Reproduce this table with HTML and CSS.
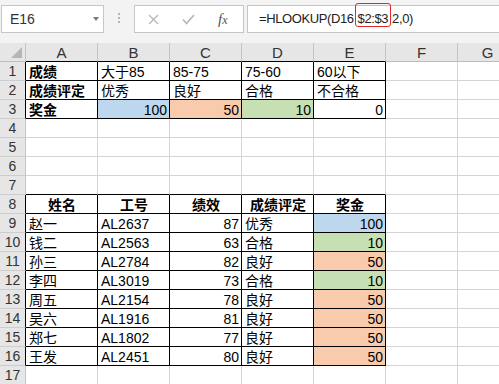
FILE: index.html
```html
<!DOCTYPE html>
<html lang="zh-CN">
<head>
    <meta charset="UTF-8">
    <meta name="viewport" content="width=device-width, initial-scale=1.0">
    <title>奖金计算</title>
    <link rel="stylesheet" href="styles.css">
</head>
<body>
    <div class="app">
        <div class="formula-bar">
            <div class="name-box">
                <span>E16</span>
                <span class="caret"></span>
            </div>
            <div class="grip"><i></i><i></i><i></i></div>
            <div class="fx-box">
                <svg width="11" height="11" viewBox="0 0 11 11">
                    <path d="M1 1 L10 10 M10 1 L1 10" stroke="#b8b8b8" stroke-width="1.4" fill="none"/>
                </svg>
                <svg width="13" height="11" viewBox="0 0 13 11">
                    <path d="M1 5.5 L4.5 9.5 L12 1" stroke="#b8b8b8" stroke-width="1.8" fill="none"/>
                </svg>
                <span class="fx"><i>f</i><i class="x">x</i></span>
            </div>
            <div class="formula"><span>=HLOOKUP(D16</span><span class="ref">$2:$3</span><span>2,0)</span></div>
        </div>

        <div class="sheet">
            <div class="row head">
                <div class="corner"><span class="tri"></span></div>
                <div class="col box-b">A</div>
                <div class="col box-b">B</div>
                <div class="col box-b">C</div>
                <div class="col box-b">D</div>
                <div class="col box-b">E</div>
                <div class="col">F</div>
                <div class="col">G</div>
            </div>

            <div class="row">
                <div class="num edge">1</div>
                <div class="cell box bold">成绩</div>
                <div class="cell box">大于85</div>
                <div class="cell box">85-75</div>
                <div class="cell box">75-60</div>
                <div class="cell box">60以下</div>
                <div class="cell"></div>
                <div class="cell"></div>
            </div>
            <div class="row">
                <div class="num edge">2</div>
                <div class="cell box bold">成绩评定</div>
                <div class="cell box">优秀</div>
                <div class="cell box">良好</div>
                <div class="cell box">合格</div>
                <div class="cell box">不合格</div>
                <div class="cell"></div>
                <div class="cell"></div>
            </div>
            <div class="row">
                <div class="num edge">3</div>
                <div class="cell box bold">奖金</div>
                <div class="cell box right blue">100</div>
                <div class="cell box right orange">50</div>
                <div class="cell box right green">10</div>
                <div class="cell box right">0</div>
                <div class="cell"></div>
                <div class="cell"></div>
            </div>
            <div class="row">
                <div class="num">4</div>
                <div class="cell"></div><div class="cell"></div><div class="cell"></div>
                <div class="cell"></div><div class="cell"></div><div class="cell"></div><div class="cell"></div>
            </div>
            <div class="row">
                <div class="num">5</div>
                <div class="cell"></div><div class="cell"></div><div class="cell"></div>
                <div class="cell"></div><div class="cell"></div><div class="cell"></div><div class="cell"></div>
            </div>
            <div class="row">
                <div class="num">6</div>
                <div class="cell"></div><div class="cell"></div><div class="cell"></div>
                <div class="cell"></div><div class="cell"></div><div class="cell"></div><div class="cell"></div>
            </div>
            <div class="row">
                <div class="num">7</div>
                <div class="cell box-b"></div><div class="cell box-b"></div><div class="cell box-b"></div>
                <div class="cell box-b"></div><div class="cell box-b"></div><div class="cell"></div><div class="cell"></div>
            </div>

            <div class="row">
                <div class="num edge">8</div>
                <div class="cell box bold center">姓名</div>
                <div class="cell box bold center">工号</div>
                <div class="cell box bold center">绩效</div>
                <div class="cell box bold center">成绩评定</div>
                <div class="cell box bold center">奖金</div>
                <div class="cell"></div>
                <div class="cell"></div>
            </div>
            <div class="row">
                <div class="num edge">9</div>
                <div class="cell box">赵一</div>
                <div class="cell box">AL2637</div>
                <div class="cell box right">87</div>
                <div class="cell box">优秀</div>
                <div class="cell box right blue">100</div>
                <div class="cell"></div>
                <div class="cell"></div>
            </div>
            <div class="row">
                <div class="num edge">10</div>
                <div class="cell box">钱二</div>
                <div class="cell box">AL2563</div>
                <div class="cell box right">63</div>
                <div class="cell box">合格</div>
                <div class="cell box right green">10</div>
                <div class="cell"></div>
                <div class="cell"></div>
            </div>
            <div class="row">
                <div class="num edge">11</div>
                <div class="cell box">孙三</div>
                <div class="cell box">AL2784</div>
                <div class="cell box right">82</div>
                <div class="cell box">良好</div>
                <div class="cell box right orange">50</div>
                <div class="cell"></div>
                <div class="cell"></div>
            </div>
            <div class="row">
                <div class="num edge">12</div>
                <div class="cell box">李四</div>
                <div class="cell box">AL3019</div>
                <div class="cell box right">73</div>
                <div class="cell box">合格</div>
                <div class="cell box right green">10</div>
                <div class="cell"></div>
                <div class="cell"></div>
            </div>
            <div class="row">
                <div class="num edge">13</div>
                <div class="cell box">周五</div>
                <div class="cell box">AL2154</div>
                <div class="cell box right">78</div>
                <div class="cell box">良好</div>
                <div class="cell box right orange">50</div>
                <div class="cell"></div>
                <div class="cell"></div>
            </div>
            <div class="row">
                <div class="num edge">14</div>
                <div class="cell box">吴六</div>
                <div class="cell box">AL1916</div>
                <div class="cell box right">81</div>
                <div class="cell box">良好</div>
                <div class="cell box right orange">50</div>
                <div class="cell"></div>
                <div class="cell"></div>
            </div>
            <div class="row">
                <div class="num edge">15</div>
                <div class="cell box">郑七</div>
                <div class="cell box">AL1802</div>
                <div class="cell box right">77</div>
                <div class="cell box">良好</div>
                <div class="cell box right orange">50</div>
                <div class="cell"></div>
                <div class="cell"></div>
            </div>
            <div class="row">
                <div class="num edge">16</div>
                <div class="cell box">王发</div>
                <div class="cell box">AL2451</div>
                <div class="cell box right">80</div>
                <div class="cell box">良好</div>
                <div class="cell box right orange">50</div>
                <div class="cell"></div>
                <div class="cell"></div>
            </div>
            <div class="row">
                <div class="num">17</div>
                <div class="cell"></div><div class="cell"></div><div class="cell"></div>
                <div class="cell"></div><div class="cell"></div><div class="cell"></div><div class="cell"></div>
            </div>
        </div>
    </div>
</body>
</html>
```

FILE: styles.css
```css
body{
    margin: 0;
    background: #fff;
    font-family: "Liberation Sans", "Noto Sans CJK SC", sans-serif;
    font-size: 14px;
    color: #000;
}
.app{
    width: 499px;
    height: 384px;
    overflow: hidden;
}

/* name box + formula input */
.formula-bar{
    display: flex;
    align-items: flex-start;
    height: 43px;
    box-sizing: border-box;
    padding: 5px 0 0 1px;
    background: #f3f3f3;
    overflow: hidden;
}
.formula-bar > div{
    flex-shrink: 0;
}
.name-box{
    display: flex;
    align-items: center;
    justify-content: space-between;
    box-sizing: border-box;
    width: 103px;
    height: 28px;
    padding: 0 4px 0 8px;
    background: #fff;
    border: 1px solid #c6c6c6;
    color: #333;
    line-height: 16px;
}
.caret{
    width: 0;
    height: 0;
    border-left: 3.5px solid transparent;
    border-right: 3.5px solid transparent;
    border-top: 4px solid #7a7a7a;
}
.grip{
    display: flex;
    flex-direction: column;
    align-items: center;
    gap: 2px;
    width: 30px;
    padding-top: 8px;
}
.grip i{
    width: 2px;
    height: 2px;
    background: #b4b4b4;
}
.fx-box{
    display: flex;
    align-items: center;
    gap: 23px;
    box-sizing: border-box;
    width: 110px;
    height: 28px;
    padding-left: 13px;
    background: #fff;
    border: 1px solid #c6c6c6;
}
.fx{
    font-family: "Liberation Serif", serif;
    font-size: 15px;
    color: #555;
    line-height: 16px;
}
.fx .x{
    font-size: 12px;
}
.formula{
    display: flex;
    align-items: center;
    box-sizing: border-box;
    width: 270px;
    height: 28px;
    margin-left: 3px;
    padding-left: 11px;
    background: #fff;
    border: 1px solid #c6c6c6;
    font-size: 13px;
    letter-spacing: -0.4px;
    line-height: 16px;
    color: #222;
    white-space: nowrap;
}
.ref{
    align-self: flex-start;
    margin: -3px 1px 0 1px;
    padding: 7px 2px 0 2px;
    border: 1px solid #e02b2b;
    border-radius: 3px;
    height: 24px;
    box-sizing: border-box;
}

/* grid */
.row{
    display: grid;
    grid-template-columns: 26px repeat(6, 72px) 60px;
    height: 19px;
}
.row > div{
    box-sizing: border-box;
    border-right: 1px solid #d4d4d4;
    border-bottom: 1px solid #d4d4d4;
    overflow: hidden;
    white-space: nowrap;
}
.head > div{
    display: flex;
    align-items: center;
    justify-content: center;
    background: #e6e6e6;
    border-right-color: #c4c4c4;
    border-bottom-color: #bdbdbd;
    color: #333;
    font-size: 15px;
}
.corner{
    position: relative;
}
.tri{
    position: absolute;
    right: 3px;
    bottom: 3px;
    width: 0;
    height: 0;
    border-left: 11px solid transparent;
    border-bottom: 11px solid #b6b6b6;
}
.row > .num{
    display: flex;
    align-items: center;
    justify-content: center;
    background: #e6e6e6;
    border-right-color: #c4c4c4;
    border-bottom-color: #cdcdcd;
    color: #333;
}
.row > .num.edge{
    border-right-color: #000;
}
.cell{
    display: flex;
    align-items: flex-end;
    padding: 0 2px 0 3px;
    line-height: 16px;
}
.row > .box{
    border-right-color: #000;
    border-bottom-color: #000;
}
.row > .box-b{
    border-bottom-color: #000;
}
.bold{
    font-weight: bold;
}
.center{
    justify-content: center;
}
.right{
    justify-content: flex-end;
}
.blue{
    background: #bdd7ee;
}
.orange{
    background: #f8cbad;
}
.green{
    background: #c6e0b4;
}
```
